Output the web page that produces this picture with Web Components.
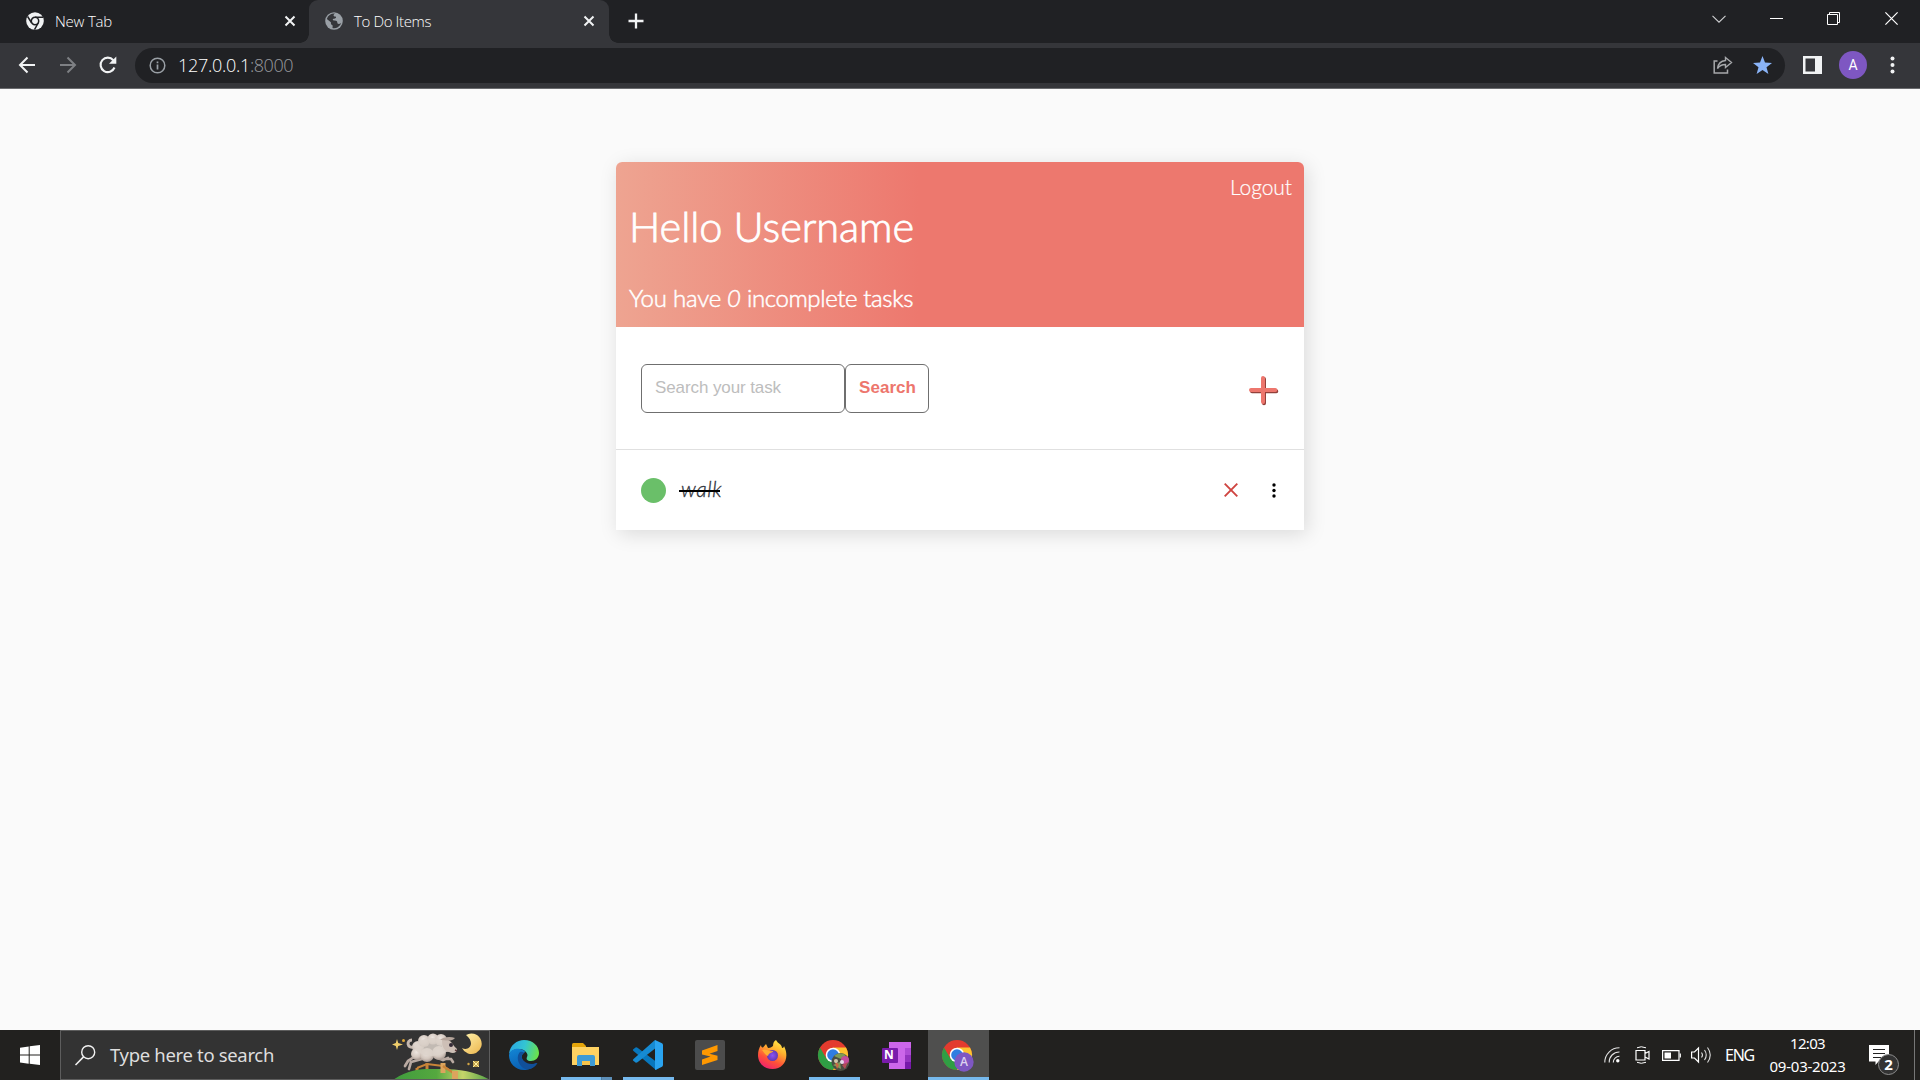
<!DOCTYPE html>
<html lang="en">
<head>
<meta charset="utf-8">
<title>To Do Items</title>
<style>
html,body{margin:0;height:100%;overflow:hidden;background:#fafafa}
</style>
</head>
<body>
<desktop-screen></desktop-screen>
<script>
const define = (name, markup, after) => {
  const tpl = document.createElement('template');
  tpl.innerHTML = markup;
  customElements.define(name, class extends HTMLElement {
    connectedCallback() {
      if (this.shadowRoot) return;
      this.attachShadow({mode: 'open'}).appendChild(tpl.content.cloneNode(true));
      if (after) after(this, this.shadowRoot);
    }
  });
};

/* Icon library: [width, height, svg body] */
const chrome = `<circle cx="15" cy="15" r="15" fill="#e33b2e"/><path d="M2 7.500A15 15 0 0 0 15 30L21.500 18.700L15 15L8.500 18.750Z" fill="#2f9e44"/><path d="M28 7.500H15L21.500 18.750L15 30A15 15 0 0 0 28 7.500Z" fill="#fdc32f"/><circle cx="15" cy="15" r="7.300" fill="#fff"/><circle cx="15" cy="15" r="5.800" fill="#2f7de1"/>`;
const ICONS = {
  chromeMono: [18,18,`<circle cx="9" cy="9" r="8.800" fill="#f1f3f4"/><circle cx="9" cy="9" r="3.700" fill="none" stroke="#202124" stroke-width="1.500"/><path d="M9 5.300H17M5.700 11L1.600 4.500M12.200 11L8.500 17.600" stroke="#202124" stroke-width="1.500"/>`],
  globe: [18,18,`<circle cx="9" cy="9" r="8.800" fill="#9aa0a6"/><path d="M9.500 1.500C7.500 3 8 4.500 9.800 4.500C11.500 4.500 11 6.500 9 6.700C7 7 7.500 8.500 9.500 8.500C12 8.500 12.500 9.500 12.500 11C13.500 12 14.500 12 16.300 10.500A7.500 7.500 0 0 1 8 16.200V13.500C6 13 6 11.500 6 10.500L1.700 7.500A7.500 7.500 0 0 1 9.500 1.500Z" fill="#35363a" transform="rotate(4 9 9)"/><path d="M9 2.200C12 1.500 15.500 4 16 8C14.500 8.500 13 7.500 12 6.200C13 4.500 12 3 9 2.200Z" fill="#9aa0a6"/>`],
  close: [12,12,`<path d="M1.500 1.500L10.500 10.500M10.500 1.500L1.500 10.500" stroke="#f1f3f4" stroke-width="2"/>`],
  plus: [16,16,`<path d="M8 0.500V15.500M0.500 8H15.500" stroke="#f1f3f4" stroke-width="2.300"/>`],
  chevron: [14,8,`<path d="M.5 .8L7 7.200L13.500 .8" fill="none" stroke="#cfd0d2" stroke-width="1.100"/>`],
  min: [13,2,`<path d="M0 .5H13" stroke="#fff"/>`],
  restore: [13,13,`<path d="M.5 2.500H10.500V12.500H.5ZM2.500 2.500V.5H12.500V10.500H10.500" fill="none" stroke="#fff"/>`],
  wclose: [13,13,`<path d="M.4 .4L12.600 12.600M12.600 .4L.4 12.600" stroke="#fff" stroke-width="1.200"/>`],
  back: [18,18,`<path d="M17 9H2M9.500 1.500L2 9L9.500 16.500" fill="none" stroke="#f1f3f4" stroke-width="2"/>`],
  forward: [18,18,`<path d="M1 9H16M8.500 1.500L16 9L8.500 16.500" fill="none" stroke="#7e8084" stroke-width="2"/>`],
  reload: [18,18,`<path d="M15.500 11.500A7.200 7.200 0 1 1 14.300 4.200" fill="none" stroke="#f1f3f4" stroke-width="2.100"/><path d="M17.300 .5V7.800H10Z" fill="#f1f3f4"/>`],
  info: [17,17,`<circle cx="8.500" cy="8.500" r="7.300" fill="none" stroke="#9aa0a6" stroke-width="1.500"/><path d="M8.500 7.500V12.500M8.500 4.500V6.200" stroke="#9aa0a6" stroke-width="1.700"/>`],
  share: [20,18,`<path d="M4.500 5H1.200V17H14.500V13.500" fill="none" stroke="#a6a8ab" stroke-width="1.500"/><path d="M12.500 1.500L18.500 6.500L12.500 11.500V8.500C8.500 8.500 6.300 9.800 4.500 12.500C5 8 7.500 5 12.500 4.500Z" fill="none" stroke="#a6a8ab" stroke-width="1.400"/>`],
  star: [19,18,`<path d="M9.500 0L12 6.600L19 6.900L13.500 11.200L15.400 18L9.500 14.100L3.600 18L5.500 11.200L0 6.900L7 6.600Z" fill="#8ab4f8"/>`],
  panel: [19,18,`<rect x="1.250" y="1.250" width="16.500" height="15.500" fill="none" stroke="#f1f3f4" stroke-width="2.500"/><path d="M12 1H18V17H12Z" fill="#f1f3f4"/>`],
  dots: [5,18,`<circle cx="2.500" cy="2.500" r="2" fill="#f1f3f4"/><circle cx="2.500" cy="9" r="2" fill="#f1f3f4"/><circle cx="2.500" cy="15.500" r="2" fill="#f1f3f4"/>`],
  addTask: [29,29,`<path d="M15 3V27.300M3 15.300H27.300" stroke="#93403a" stroke-width="4" stroke-linecap="round"/><path d="M14 2V26M2 14H26.300" stroke="#ed766d" stroke-width="4" stroke-linecap="round"/>`],
  remove: [14,14,`<path d="M.7 .7L13.300 13.300M13.300 .7L.7 13.300" stroke="#cf4440" stroke-width="1.900"/>`],
  kebab: [4,15,`<circle cx="2" cy="2" r="1.700"/><circle cx="2" cy="7.500" r="1.700"/><circle cx="2" cy="13" r="1.700"/>`],
  windows: [20,20,`<path d="M0 2.800L8.700 1.500V9.500H0ZM9.700 1.300L20 0V9.500H9.700ZM0 10.500H8.700V18.700L0 17.400ZM9.700 10.500H20V20L9.700 18.800Z" fill="#fff"/>`],
  search: [21,21,`<circle cx="13.200" cy="7.200" r="6.500" fill="none" stroke="#f2f2f2" stroke-width="1.400"/><path d="M8.500 11.900L.5 20" stroke="#f2f2f2" stroke-width="1.500"/>`],
  sheep: [97,50,`<defs><linearGradient id="h" x2="1"><stop stop-color="#3f9b3d"/><stop offset=".45" stop-color="#55a83f"/><stop offset=".72" stop-color="#c5d46a"/><stop offset="1" stop-color="#4fa044"/></linearGradient><radialGradient id="w" cx=".45" cy=".35" r=".65"><stop stop-color="#ece5df"/><stop offset=".65" stop-color="#d3c7be"/><stop offset="1" stop-color="#a89a92"/></radialGradient><linearGradient id="m" x2=".8" y2="1"><stop stop-color="#fff2ad"/><stop offset="1" stop-color="#eebb55"/></linearGradient></defs>
  <path d="M24 38V41M34 33V40" fill="none" stroke="#c98438" stroke-width="3"/><path d="M24 38L34 34L50 36L62 44" fill="none" stroke="#c98438" stroke-width="2"/>
  <path d="M0 50C18 37 34 39 47 39C68 39 84 42 97 50Z" fill="url(#h)"/>
  <path d="M50 33V43" stroke="#dca45d" stroke-width="5"/><path d="M50 36L62 44" stroke="#c98438" stroke-width="2.500"/><path d="M62 41V50" stroke="#dca45d" stroke-width="6"/>
  <path d="M24 25L15 31L12 36M29 29L18 32L16 39M44 26L51 29L58 29L60 32M42 27L50 30L55 28" fill="none" stroke="#b9aaa2" stroke-width="2.700" stroke-linecap="round"/>
  <path d="M21 17C14 19 13 10 19 10" fill="none" stroke="#c5b8af" stroke-width="3"/>
  <g fill="url(#w)"><circle cx="25" cy="17" r="6"/><circle cx="24" cy="24" r="6"/><circle cx="31" cy="11" r="6"/><circle cx="34" cy="25" r="7"/><circle cx="40" cy="9" r="5.500"/><circle cx="48" cy="10" r="6"/><circle cx="46" cy="23" r="7"/><circle cx="54" cy="17" r="5"/></g><ellipse cx="39" cy="17" rx="17" ry="9" fill="#dcd2ca" opacity=".85"/>
  <path d="M49 10C54 8 58 11 61 16L64 19C64 23 60 24 56 22C51 21 49 17 49 10Z" fill="#cdbfb6"/><path d="M47 10C50 7 57 6 62 8C59 12 52 10 47 10Z" fill="#b5a59b"/><circle cx="58" cy="15" r="2" fill="#332b37"/><path d="M62 20L64 21" stroke="#5b3b3b" stroke-width="1.500"/>
  <path d="M73 5A10.300 10.300 0 1 1 69 18C76 22 83 13 73 5Z" fill="url(#m)"/>
  <path d="M4 9L5.200 13L10 14.500L5.200 16L4 20L2.800 16L-1 14.500L2.800 13Z" fill="#f0cf6c"/><circle cx="10.500" cy="10.500" r="1.500" fill="#e0a836"/><rect x="80" y="31" width="6" height="6" fill="#c0a04c"/><path d="M80 31L86 37M86 31L80 37" stroke="#fff0a0"/><circle cx="75.500" cy="34" r="1.200" fill="#d3a544"/>`],
  edge: [30,30,`<defs><linearGradient id="e" x1="0" x2="1" y1=".3" y2=".5"><stop stop-color="#2aa6e2"/><stop offset=".5" stop-color="#33c5d3"/><stop offset="1" stop-color="#6be24a"/></linearGradient><linearGradient id="f" x2=".5" y2="1"><stop stop-color="#1387d6"/><stop offset="1" stop-color="#0a5db0"/></linearGradient></defs><path d="M0 14C1 5 8 0 15 0C24 0 30 6 30 13C30 18 26 21 22 21C18 21 17 19 18 17C20 14 16 9 10 9C5 9 2 11 0 14Z" fill="url(#e)"/><path d="M0 15C1 10 6 8 11 9C16 10 17 12 15 13C12 15 12 19 15 22C18 25 23 25 28 23C25 28 20 30 15 30C6 30 0 23 0 15Z" fill="url(#f)"/><path d="M11 12C6 17 10 28 18 29.500C23 29 27 26 28.500 23C23 25 18 24 15 21C12 18 12 15 15 12.500C14 11.500 12 11.500 11 12Z" fill="#11509a"/>`],
  folder: [28,24,`<path d="M0 1.500Q0 0 1.500 0H11L14 3V8H0Z" fill="#e5a50a"/><path d="M0 4H27V22H0Z" fill="#fed262"/><path d="M5 23V14Q5 12 7 12H21Q23 12 23 14V23H18V18H10V23Z" fill="#3d9bd6"/><path d="M10 18H18V22H10Z" fill="#f7c34a"/>`],
  vscode: [30,30,`<path d="M0 9.500L2.500 7.500Q3.500 7 4.500 7.800L29 26L23 30L.5 11Q-.5 10 0 9.500Z" fill="#0877bd"/><path d="M0 20.500L2.500 22.500Q3.500 23 4.500 22.200L24 7L22 0L.5 19Q-.5 20 0 20.500Z" fill="#168bd3"/><path d="M22 0L28.500 3Q30 3.700 30 5V25Q30 26.300 28.500 27L22 30Z" fill="#2aa4f0"/>`],
  sublime: [30,30,`<rect width="30" height="30" rx="2" fill="#4c4c4c"/><path d="M7 10.500L22.500 5V11L14.500 13.700L22.500 15.800V20L7 25V19.500L15.500 16.500L7 14.500Z" fill="#ff9800"/>`],
  firefox: [29,30,`<defs><linearGradient id="x" x1=".8" x2=".3" y2="1"><stop stop-color="#fff04a"/><stop offset=".35" stop-color="#ffb02e"/><stop offset=".7" stop-color="#ff5038"/><stop offset="1" stop-color="#ef2170"/></linearGradient><radialGradient id="y"><stop stop-color="#8b53f5"/><stop offset="1" stop-color="#6139b5"/></radialGradient></defs><path d="M18 0C20 4 24 4 24 8C26 8 26 6 26 6C32 18 26 29 14.500 29C6 29 0 23 0 15C0 11 1 8 3 5C3 7 4 7.500 5 7.500L8 4L10 8C13 8 15 6 15 6C15 3 16 1 18 0Z" fill="url(#x)"/><circle cx="14.500" cy="15.500" r="5.500" fill="url(#y)"/><path d="M4 10C8 8 10 12 15 11C15 13 11 12 10 16C7 15 6 12 4 10Z" fill="#ffad31"/>`],
  chrome: [32,31,chrome+`<circle cx="22.500" cy="22" r="9" fill="#4a4e43"/><path d="M16 16Q21 11 28 15L23 19ZM15 25L22 22L23 29Z" fill="#7e9b55"/><circle cx="27" cy="20" r="4" fill="#c44e9c"/><circle cx="24" cy="22" r="2" fill="#e6dbea"/><path d="M16 19L21 25L19 29Z" fill="#c86a44"/><path d="M24 25L30 22L27 29Z" fill="#b44b59"/><circle cx="18" cy="21" r="2" fill="#cfc8a9"/>`],
  onenote: [29,28,`<path d="M7 1H29V28H7Z" fill="#cc66ea"/><path d="M23 7H29V14H23Z" fill="#ae4bd5"/><path d="M23 14H29V21H23Z" fill="#9332bf"/><path d="M23 21H29V28H23Z" fill="#7719aa"/><rect y="7" width="16" height="15" rx="1" fill="#7a1bab"/>`],
  chromeA: [32,31,chrome+`<circle cx="22" cy="22" r="9.700" fill="#7e57c2"/>`],
  wifi: [16,16,`<circle cx="13.800" cy="13.800" r="1.700" fill="#fff"/><g fill="none" stroke="#e3e3e3" stroke-width="1.100"><path d="M9.300 15.500A6 6 0 0 1 15.500 9.300M5.200 15.500A10 10 0 0 1 15.500 5M.8 15.500A14.500 14.500 0 0 1 15.500 .8"/></g>`],
  camera: [15,18,`<path d="M1 4.500H10V14H1ZM10 7.500L14 5.500V13L10 11" fill="none" stroke="#fff" stroke-width="1.200"/><path d="M2 1.800Q6 -.3 11 1.800M2 16.300Q6 18.300 11 16.300" fill="none" stroke="#fff"/>`],
  battery: [19,12,`<path d="M.6 1.600H17V11.400H.6Z" fill="none" stroke="#fff" stroke-width="1.200"/><path d="M2.500 3.500H9V9.500H2.500Z" fill="#fff"/><path d="M18.300 4.500V8.500" stroke="#fff" stroke-width="1.200"/>`],
  volume: [21,18,`<path d="M.6 6H3.500L7.500 2V16L3.500 12H.6Z" fill="none" stroke="#fff" stroke-width="1.200"/><path d="M10.500 6.500Q12.500 9 10.500 11.500M13.500 4Q17 9 13.500 14M16.500 1.500Q22 9 16.500 16.500" fill="none" stroke="#ddd" stroke-width="1.100"/>`],
  note: [20,20,`<path d="M0 0H20V16.500H9.500L6.500 20V16.500H0Z" fill="#fff"/><path d="M4 4.500H16M4 8.500H16M4 12.500H12" stroke="#222" stroke-width="1"/>`]
};
define('ui-icon', `<style>:host{display:block;flex:none;line-height:0}svg{display:block;overflow:visible}</style>`, (el, root) => {
  const [w, h, body] = ICONS[el.getAttribute('name')];
  root.innerHTML += `<svg width="${w}" height="${h}" viewBox="0 0 ${w} ${h}">${body}</svg>`;
});

define('browser-tab', `<style>
:host{display:flex;align-items:center;height:43px;box-sizing:border-box;position:relative;padding:0 13px 8px 26px;width:309px;font:300 15px/20px "Open Sans",sans-serif;color:#fff}
:host([active]){width:300px;background:#35363a;border-radius:9px 9px 0 0;padding:0 14px 8px 16px}
:host([active])::before,:host([active])::after{content:"";position:absolute;bottom:0;width:9px;height:9px}
:host([active])::before{left:-9px;background:radial-gradient(circle at 0 0,transparent 8.500px,#35363a 9px)}
:host([active])::after{right:-9px;background:radial-gradient(circle at 100% 0,transparent 8.500px,#35363a 9px)}
::slotted(ui-icon),.c{margin-top:7px}
.t{flex:1;padding:0 0 0 11px;margin-top:6px}
</style><slot name="icon"></slot><div class="t"><slot></slot></div><ui-icon class="c" name="close"></ui-icon>`);

define('browser-chrome', `<style>
:host{display:block;height:89px;background:#35363a;font-family:"Open Sans",sans-serif}
.strip{display:flex;height:43px;background:#202124}
.new{margin:13px 0 0 19px}
.win{display:flex;margin-left:auto;padding:12px 22px 0 0}
.bar{display:flex;align-items:center;border-bottom:1px solid #6a6b6e;box-sizing:border-box;height:46px;padding:0 25px 1px 18px}
.omni{display:flex;align-items:center;height:35px;border-radius:18px;background:#202124;width:1650px;box-sizing:border-box;padding:0 13px 0 14px;margin:0 18px 0 18px;font-size:18px;font-weight:300;color:#fff}
.port{color:#989a9e}
.ava{width:28px;height:28px;border-radius:50%;background:#7e57c2;color:#fff;font:400 14px/28px Roboto,sans-serif;text-align:center;margin:0 23px 0 17px}
</style>
<div class="strip">
<browser-tab><ui-icon slot="icon" name="chromeMono"></ui-icon><fit-text w="57">New Tab</fit-text></browser-tab>
<browser-tab active><ui-icon slot="icon" name="globe"></ui-icon><fit-text w="77">To Do Items</fit-text></browser-tab>
<ui-icon class="new" name="plus"></ui-icon>
<div class="win"><ui-icon name="chevron" style="margin:3px 44px 0 0"></ui-icon><ui-icon name="min" style="margin:6px 44px 0 0"></ui-icon><ui-icon name="restore" style="margin-right:45px"></ui-icon><ui-icon name="wclose"></ui-icon></div>
</div>
<div class="bar">
<ui-icon name="back" style="margin-right:23px"></ui-icon><ui-icon name="forward" style="margin-right:22px"></ui-icon><ui-icon name="reload"></ui-icon>
<div class="omni"><ui-icon name="info" style="margin-right:12px"></ui-icon><fit-text w="72">127.0.0.1</fit-text><fit-text class="port" w="43">:8000</fit-text><ui-icon name="share" style="margin:0 20px 0 auto"></ui-icon><ui-icon name="star"></ui-icon></div>
<ui-icon name="panel"></ui-icon><div class="ava">A</div><ui-icon name="dots"></ui-icon>
</div>`);

define('todo-header', `<style>
:host{display:flex;flex-direction:column;box-sizing:border-box;height:165px;padding:12px 12px 0 13px;border-radius:6px 6px 0 0;color:#fff;background:linear-gradient(to right,#eea491,#ed786e 44%);font-family:Lato,sans-serif;font-weight:300}
.out{align-self:flex-end;font-size:21px;line-height:26px;-webkit-text-stroke:.2px #fff}
h1{margin:-2px 0 0;font-size:41.500px;line-height:56px;font-weight:300;-webkit-text-stroke:.8px #fff}
h3{margin:28px 0 0;font-size:24px;line-height:32px;font-weight:300;display:flex;justify-content:space-between;width:284px;-webkit-text-stroke:.5px #fff}
</style>
<div class="out"><fit-text w="62">Logout</fit-text></div>
<h1><fit-text w="285">Hello Username</fit-text></h1>
<h3><fit-text w="92">You have</fit-text><i>0</i><fit-text w="166">incomplete tasks</fit-text></h3>`);

define('todo-search', `<style>
:host{display:flex;align-items:center;height:123px;padding:1px 26px 0 25px;box-sizing:border-box;border-bottom:1px solid #e0e0e0;font:17px/20px "Liberation Sans",sans-serif}
.in,.btn{box-sizing:border-box;height:49px;border:1px solid #6f6f6f;border-radius:6px;padding:13px 0 0 13px}
.in{width:204px;color:#bdbdbd}
.btn{width:84px;color:#ed766d;font-weight:bold}
ui-icon{margin:4px 0 0 auto}
</style><div class="in"><fit-text w="126">Search your task</fit-text></div><div class="btn"><fit-text w="57">Search</fit-text></div><ui-icon name="addTask"></ui-icon>`);

define('todo-item', `<style>
:host{display:flex;align-items:center;height:80px;padding:0 28px 0 25px;box-sizing:border-box;font:italic 300 21px/26px Lato,sans-serif;color:#30343c}
.dot{width:25px;height:25px;border-radius:50%;background:#6abf69;margin-right:13px}
.t{display:grid}
.t::after{content:"";grid-area:1/1;align-self:center;height:2px;background:#000;width:41px;margin-top:2px}
fit-text{grid-area:1/1;padding-left:2px;margin-top:-2px;-webkit-text-stroke:.3px #30343c}
</style><div class="dot"></div><div class="t"><fit-text w="41"></fit-text></div>
<ui-icon name="remove" style="margin:0 34px 0 auto"></ui-icon><ui-icon name="kebab"></ui-icon>`, (el, root) => {
  root.querySelector('fit-text').textContent = el.textContent;
});

define('todo-card', `<style>
:host{display:block;width:688px;height:368px;margin:73px auto 0;background:#fff;border-radius:6px 6px 0 0;box-shadow:3px 4px 20px rgba(0,0,0,.13)}
</style><todo-header></todo-header><todo-search></todo-search><todo-item>walk</todo-item>`);

define('task-button', `<style>
:host{display:flex;align-items:center;justify-content:center;position:relative;width:61px;height:50px;margin-right:1px}
:host([open])::after,:host([active])::after{content:"";position:absolute;left:5px;right:5px;bottom:0;height:3px;background:#76b9ed}
:host([active]){background:#4f4f4e}
:host([active])::after{left:0;right:0}
:host([stack])::after{background:linear-gradient(to right,#76b9ed 40px,#41698a 40px,#5d8fb8 41px)}
::slotted(ui-icon){margin-right:1px}
</style><slot></slot>`);

define('task-bar', `<style>
:host{display:flex;height:50px;background:#22211f;color:#fff;font-family:"Noto Sans",sans-serif}
.start{width:60px;display:flex;align-items:center;justify-content:center}
.find{display:flex;align-items:center;box-sizing:border-box;width:430px;height:50px;border:1px solid #5d5d5d;background:#333;padding-left:14px;font-size:18.500px;color:#dedede;overflow:hidden}
.find fit-text{margin-top:-2px}
.apps{display:flex;margin-left:4px}
.tray{display:flex;align-items:center;margin-left:auto}
.eng{font-size:16px;margin:0 16px 0 13px;line-height:20px}
.time{display:flex;flex-direction:column;align-items:center;width:75px;font-size:15px;line-height:23px;margin-right:24px;padding-bottom:1px}
.note{position:relative;margin-right:25px}
.count{position:absolute;left:9px;top:9px;width:19px;height:19px;border:1px solid #8d8d8d;border-radius:50%;background:#333;font:bold 15px/19px "Open Sans",sans-serif;text-align:center}
.end{width:5px;height:50px;border-left:1px solid #777}
.b{position:absolute;color:#fff;font-family:"Open Sans",sans-serif;font-weight:700;line-height:14px}
</style>
<div class="start"><ui-icon name="windows"></ui-icon></div>
<div class="find"><ui-icon name="search" style="margin-right:14px"></ui-icon><fit-text w="164">Type here to search</fit-text><ui-icon name="sheep" style="margin:0 -1px 0 auto"></ui-icon></div>
<div class="apps">
<task-button><ui-icon name="edge"></ui-icon></task-button>
<task-button open stack><ui-icon name="folder"></ui-icon></task-button>
<task-button open><ui-icon name="vscode"></ui-icon></task-button>
<task-button><ui-icon name="sublime"></ui-icon></task-button>
<task-button><ui-icon name="firefox"></ui-icon></task-button>
<task-button open><ui-icon name="chrome"></ui-icon></task-button>
<task-button><ui-icon name="onenote"></ui-icon><span class="b" style="left:18px;top:18px;font-size:12px">N</span></task-button>
<task-button active><ui-icon name="chromeA"></ui-icon><span class="b" style="left:32px;top:25px;font-size:12px;font-weight:600;color:#ddd2ef">A</span></task-button>
</div>
<div class="tray">
<ui-icon name="wifi" style="margin-right:15px"></ui-icon><ui-icon name="camera" style="margin-right:12px"></ui-icon><ui-icon name="battery" style="margin-right:10px"></ui-icon><ui-icon name="volume"></ui-icon>
<div class="eng"><fit-text w="29">ENG</fit-text></div>
<div class="time"><fit-text w="35">12:03</fit-text><fit-text w="76">09-03-2023</fit-text></div>
<div class="note"><ui-icon name="note"></ui-icon><div class="count">2</div></div>
<div class="end"></div>
</div>`);

define('desktop-screen', `<style>
:host{display:flex;flex-direction:column;width:1920px;height:1080px;background:#fafafa}
main{flex:1;display:flex;align-items:flex-start}
</style><browser-chrome></browser-chrome><main><todo-card></todo-card></main><task-bar></task-bar>`);

/* Text run whose tracking is adjusted so that it takes the given width */
define('fit-text', `<style>:host{display:block;white-space:nowrap}span{display:inline-block}</style><span><slot></slot></span>`, (el, root) => {
  const span = root.querySelector('span'), want = +el.getAttribute('w');
  const n = el.textContent.length;
  span.style.letterSpacing = (want - span.getBoundingClientRect().width) / n + 'px';
});
</script>
</body>
</html>
